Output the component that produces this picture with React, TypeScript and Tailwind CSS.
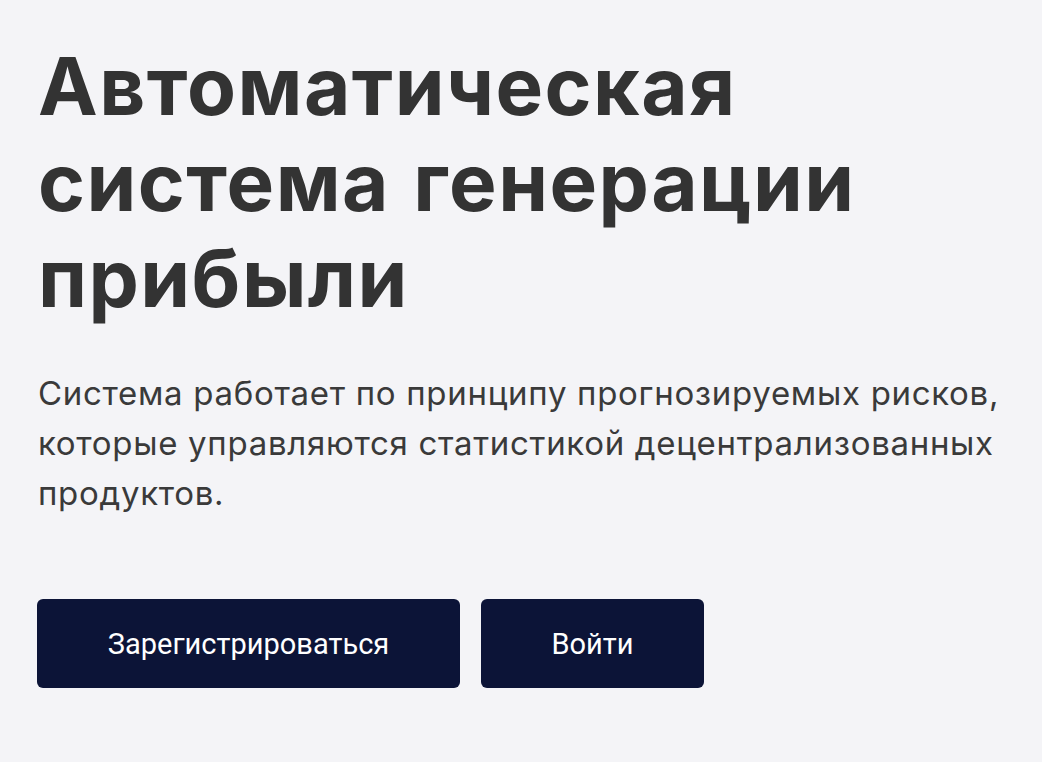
export default function App() {
  return (
    <div className="min-h-[762px] w-full bg-[#f4f4f7] px-[38px] pt-[38px] font-['Inter',sans-serif] text-[#333333]">
      <h1 className="text-[80px] font-bold leading-[96px] tracking-[0.018em] [word-spacing:3px]">
        Автоматическая
        <br />
        система генерации
        <br />
        прибыли
      </h1>
      <p className="mt-[42px] max-w-[990px] text-[33px] leading-[50px] tracking-[0.021em] text-[#3a3a3a]">
        Система работает по принципу прогнозируемых рисков, которые управляются статистикой децентрализованных продуктов.
      </p>
      <div className="mt-[81px] -ml-px flex gap-[21px] font-['Roboto',sans-serif] text-[29px] text-white">
        <button className="h-[89px] w-[423px] rounded-md bg-[#0c1437] pt-[3px]">Зарегистрироваться</button>
        <button className="h-[89px] w-[223px] rounded-md bg-[#0c1437] pt-[3px]">Войти</button>
      </div>
    </div>
  )
}
